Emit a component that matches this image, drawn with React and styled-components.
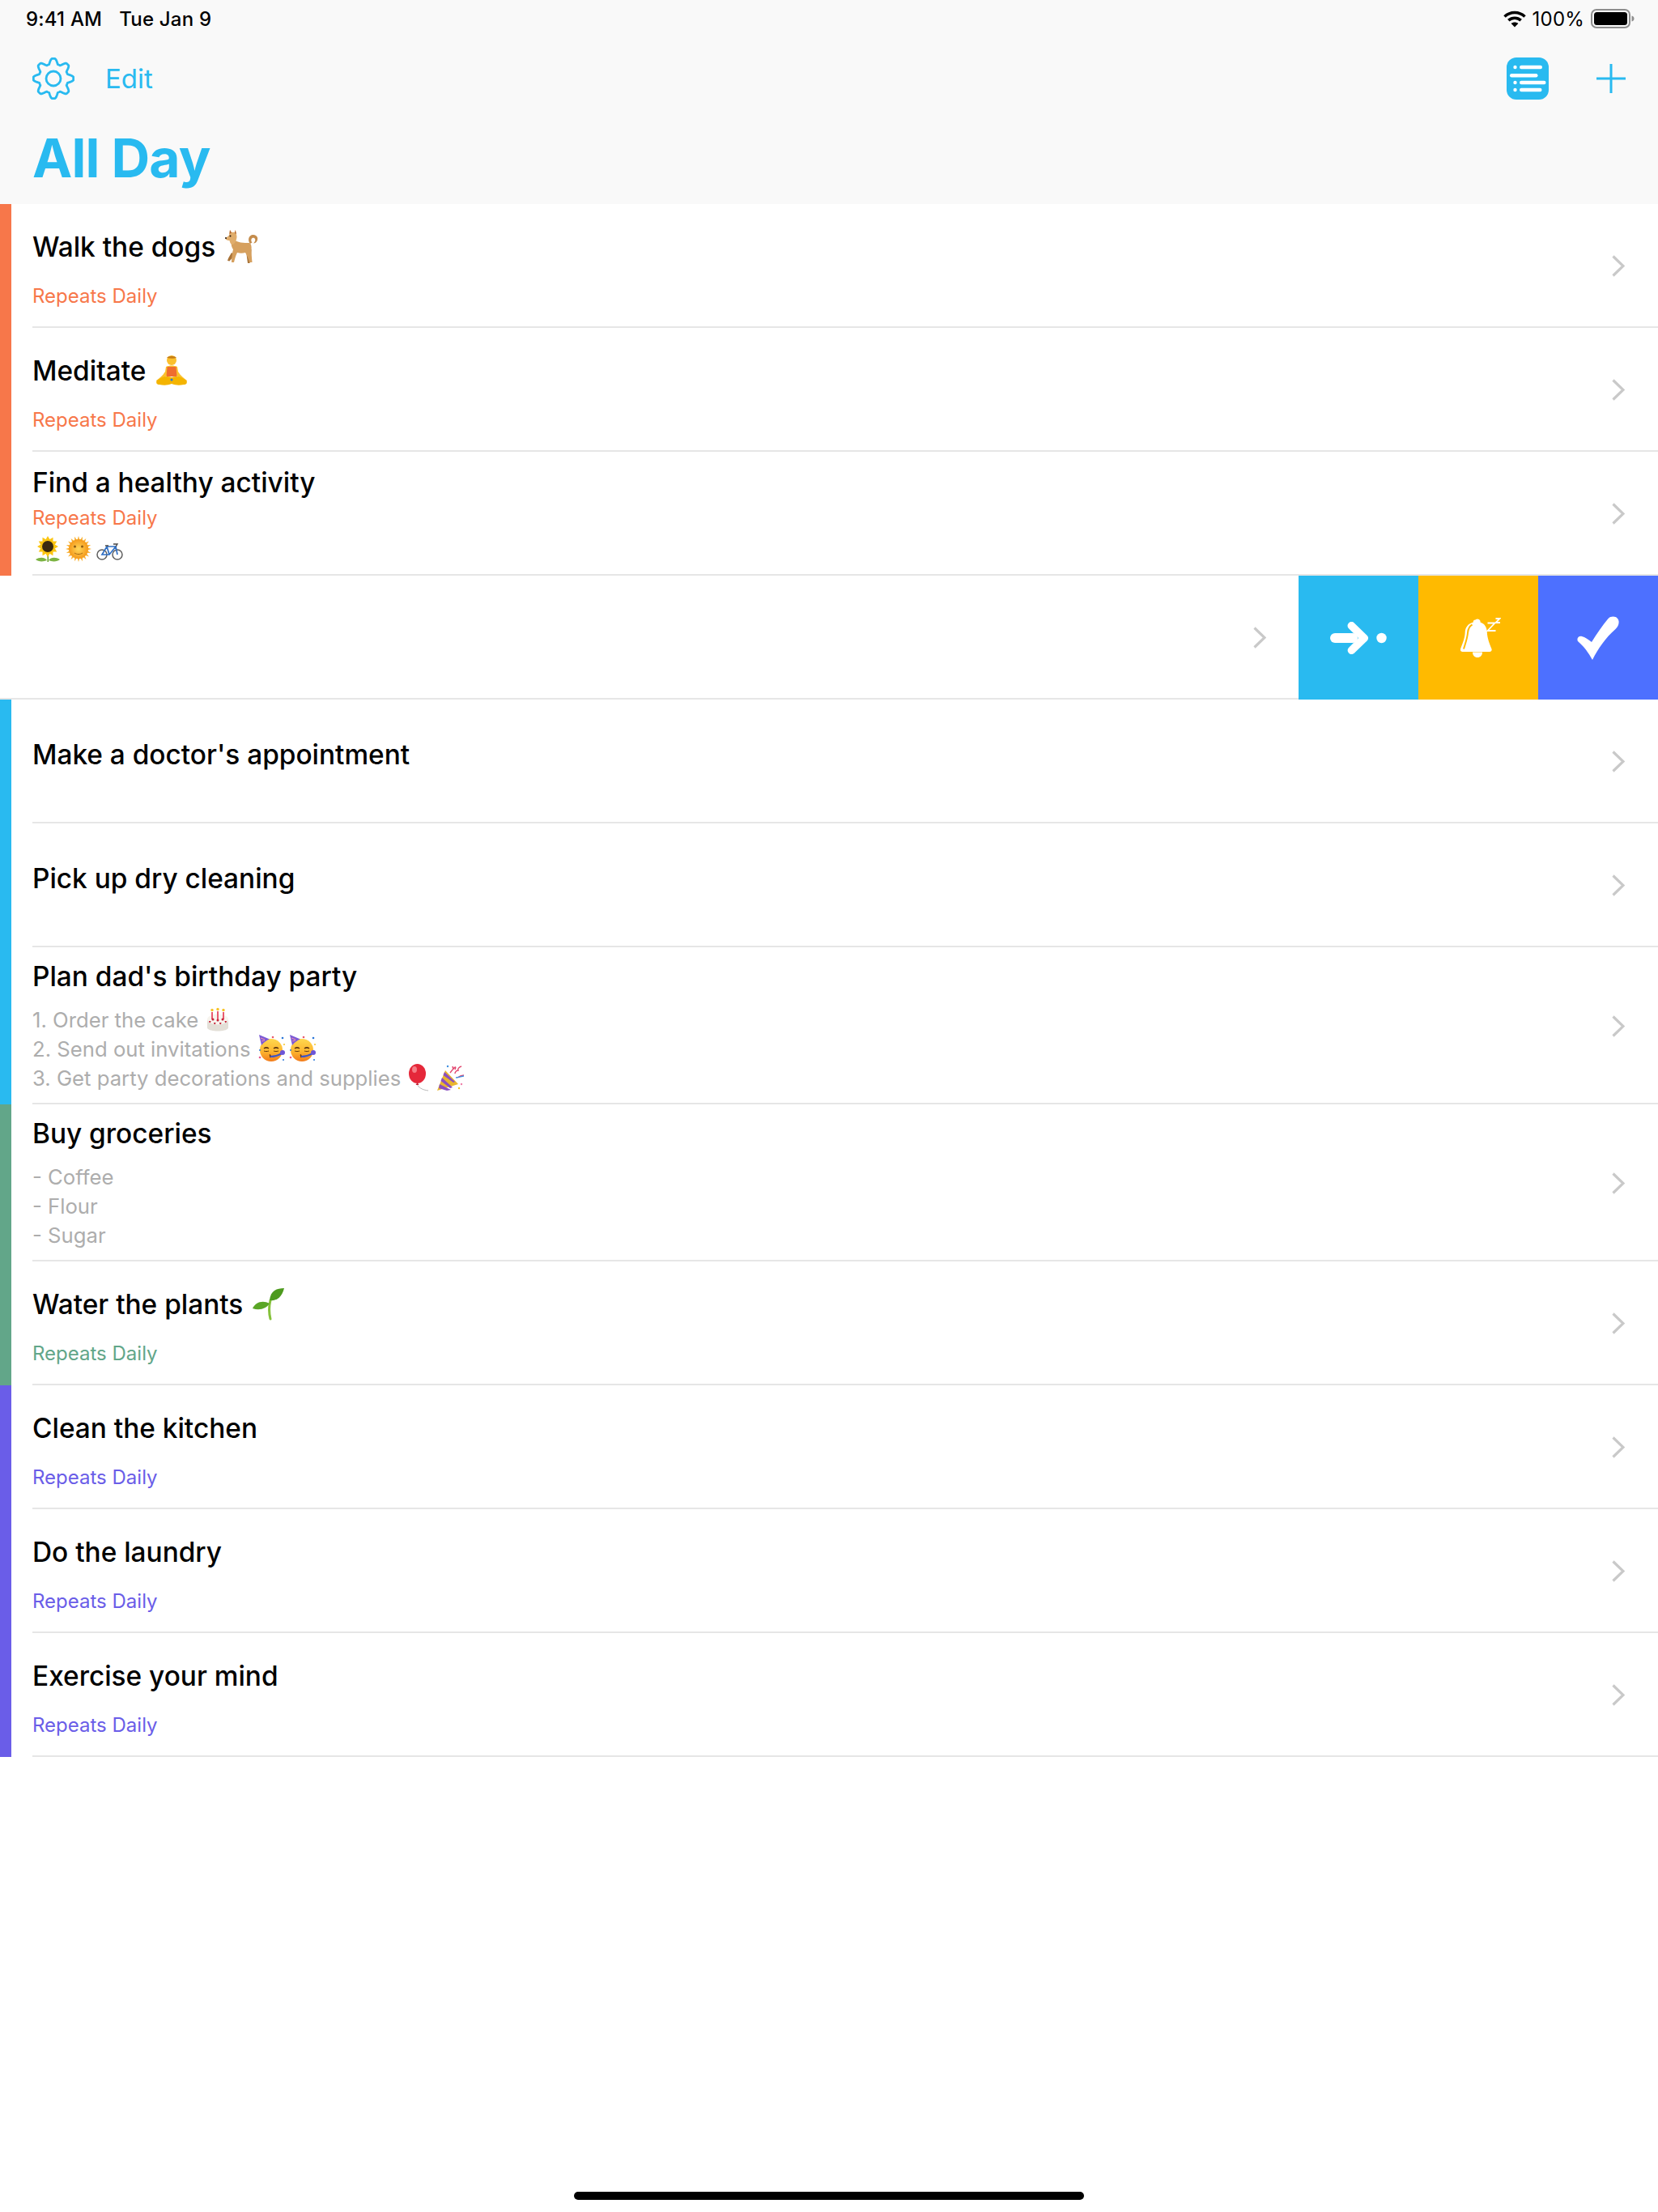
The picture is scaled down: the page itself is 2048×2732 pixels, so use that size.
import React from "react";
import styled, { createGlobalStyle } from "styled-components";

const SKY = "#29baf0";
const ORANGE = "#f7774a";
const GREEN = "#62a689";
const PURPLE = "#6a5de8";

const GlobalStyle = createGlobalStyle`
  html, body { margin: 0; padding: 0; background: #fff; }
  body { font-family: Inter, "Liberation Sans", sans-serif; color: #000; }
`;

const Page = styled.div`
  display: flex;
  flex-direction: column;
  width: 2048px;
  height: 2732px;
  overflow: hidden;
  background: #fff;
`;

const Header = styled.header`
  display: flex;
  flex-direction: column;
  height: 252px;
  flex: none;
  padding: 0 40px;
  box-sizing: border-box;
  background: #f9f9f9;
`;

const StatusBar = styled.div`
  display: flex;
  align-items: center;
  height: 46px;
  margin: 0 -11px 0 -8px;
  font-size: 24px;
  font-weight: 500;
  letter-spacing: 0.2px;
`;

const StatusTime = styled.span`
  margin-right: 21px;
`;

const StatusRight = styled.div`
  display: flex;
  align-items: center;
  gap: 8px;
  margin-left: auto;
  font-weight: 400;
`;

const Toolbar = styled.div`
  display: flex;
  align-items: center;
  height: 52px;
  margin-top: 25px;
`;

const EditLink = styled.span`
  margin-left: 38px;
  font-size: 33px;
  color: ${SKY};
`;

const ToolbarRight = styled.div`
  display: flex;
  align-items: center;
  gap: 59px;
  margin-left: auto;
`;

const Heading = styled.h1`
  margin: 32px 0 0;
  font-size: 66px;
  line-height: 80px;
  font-weight: 700;
  letter-spacing: -0.8px;
  color: ${SKY};
`;

const Group = styled.section`
  border-left: 14px solid ${(p) => p.$color};
  padding-left: 26px;
`;

const Row = styled.div`
  display: flex;
  align-items: center;
  height: ${(p) => p.$height || 153}px;
  box-sizing: border-box;
  padding-right: 41px;
  border-bottom: 2px solid #e6e6e6;
`;

const RowBody = styled.div`
  flex: 1;
  align-self: flex-start;
  padding-top: ${(p) => p.$top || 31}px;
`;

const Title = styled.div`
  display: flex;
  align-items: center;
  gap: 12px;
  height: 44px;
  font-size: 33.4px;
  font-weight: 500;
`;

const Repeats = styled.div`
  margin-top: ${(p) => p.$gap ?? 21}px;
  height: 36px;
  line-height: 36px;
  font-size: 24px;
  color: ${(p) => p.$color};
`;

const Notes = styled.div`
  margin-top: 13px;
`;

const NoteLine = styled.div`
  display: flex;
  align-items: center;
  gap: 9px;
  height: 36px;
  font-size: 25.7px;
  color: #adadad;
`;

const EmojiRow = styled.div`
  display: flex;
  align-items: center;
  gap: 6px;
  height: 36px;
  padding: 2px 0 0 3px;
`;

const Emoji = styled.svg`
  flex: none;
  width: ${(p) => p.$size}px;
  height: ${(p) => p.$size}px;
`;

const Pair = styled.span`
  display: flex;
  gap: ${(p) => p.$gap}px;
`;

const SwipedRow = styled.div`
  display: flex;
  height: 153px;
`;

const SwipedBody = styled.div`
  display: flex;
  align-items: center;
  justify-content: flex-end;
  flex: 1;
  padding-right: 40px;
  border-bottom: 2px solid #e6e6e6;
`;

const ActionButton = styled.button`
  display: flex;
  align-items: center;
  justify-content: center;
  width: 148px;
  height: 153px;
  padding: 0 0 0 ${(p) => p.$shift || 0}px;
  border: 0;
  background: ${(p) => p.$color};
`;

const HomeBar = styled.div`
  width: 630px;
  height: 10px;
  margin: auto auto 15px;
  border-radius: 5px;
  background: #000;
`;

const ChevronSvg = styled.svg`
  flex: none;
  margin-top: 2px;
`;

const gearPath = (() => {
  const pts = [];
  for (let i = 0; i < 160; i++) {
    const t = (i / 160) * Math.PI * 2;
    const w = Math.max(-1, Math.min(1, 1.3 * Math.cos(8 * t)));
    const r = 21.4 + 3.3 * w;
    pts.push(`${(26 + r * Math.cos(t)).toFixed(2)} ${(26 + r * Math.sin(t)).toFixed(2)}`);
  }
  return "M" + pts.join("L") + "Z";
})();

const GearIcon = () => (
  <svg width="52" height="52" viewBox="0 0 52 52" fill="none" stroke={SKY} strokeWidth="2.800" strokeLinejoin="round">
    <path d={gearPath} />
    <circle cx="26" cy="26" r="9" />
  </svg>
);

const WifiIcon = () => (
  <svg width="28" height="21" viewBox="0 0 28 21" fill="none" stroke="#000" strokeWidth="3.600">
    <path d="M1.500 7.500C8.500 .8 19.500 .8 26.500 7.500" />
    <path d="M6.300 12.200c4.400-4 11-4 15.400 0" />
    <path d="M14 20.500 9.600 16c2.600-2 6.200-2 8.800 0z" fill="#000" stroke="none" />
  </svg>
);

const BatteryIcon = () => (
  <svg width="54" height="24" viewBox="0 0 54 24">
    <rect x="1" y="1" width="47" height="22" rx="6" fill="none" stroke="#8e8e8e" strokeWidth="2" />
    <rect x="4" y="4" width="41" height="16" rx="3.500" fill="#000" />
    <path d="M50.500 8.500c2 .5 3 1.800 3 3.500s-1 3-3 3.500z" fill="#8e8e8e" />
  </svg>
);

const ListIcon = () => (
  <svg width="52" height="52" viewBox="0 0 52 52">
    <rect width="52" height="52" rx="12" fill={SKY} />
    <g fill="#fff">
      <circle cx="10.500" cy="12" r="2.200" />
      <rect x="16" y="9.800" width="28" height="4.400" rx="2.200" />
      <rect x="4" y="20" width="34.500" height="4.400" rx="2.200" />
      <circle cx="10.500" cy="31" r="2.200" />
      <rect x="16" y="28.800" width="32.500" height="4.400" rx="2.200" />
      <circle cx="10.500" cy="40" r="2.200" />
      <rect x="16" y="37.800" width="27.500" height="4.400" rx="2.200" />
    </g>
  </svg>
);

const PlusIcon = () => (
  <svg width="36" height="36" viewBox="0 0 36 36" stroke={SKY} strokeWidth="3">
    <path d="M18 0v36M0 18h36" />
  </svg>
);

const Chevron = () => (
  <ChevronSvg width="16" height="27" viewBox="0 0 16 27" fill="none" stroke="#c9c9c9" strokeWidth="3.200">
    <path d="M1.500 1.500 14 13.500 1.500 25.500" />
  </ChevronSvg>
);

const MoveIcon = () => (
  <svg width="72" height="42" viewBox="0 0 72 42" fill="#fff">
    <rect x="1" y="15" width="34" height="12" rx="6" />
    <path d="M24 2.500c2-1.800 4.800-2 6.800 0l16 15.500c1.800 1.700 1.800 4.500 0 6.200l-15.800 15.300c-2 2-5 2-7-.1-2-2-1.800-4.800.2-6.700L36 21 24 9.300c-2-1.900-2-5 0-6.800z" />
    <circle cx="64.500" cy="21" r="6.200" />
  </svg>
);

const BellIcon = () => (
  <svg width="50" height="50" viewBox="0 0 50 50" fill="none">
    <path d="M18.500 2.500a4 4 0 0 1 5 0 3 3 0 0 1 1 3c6 2 8 7 8.300 12 .3 8 3 14 5.700 21 .5 2-.5 3.500-2.500 3.500H2.500C.5 42 -.5 40.500 0 38.500c2.500-7 5.500-13 5.700-21 .3-5 3-10 10-12a3 3 0 0 1 2.800-3z" fill="#fff" />
    <path d="M14.500 8.500c-4 2-5 5.500-5.500 10-.5 7-3 13-5 20" stroke="#ffba00" strokeWidth="2" />
    <path d="M15 42.500c0 4 2.500 6.500 6 6.500s6-2.500 6-6.500z" fill="#fff" />
    <path d="M33.500 6.500h9l-9 9.500h10M43.500 1h5l-5 5h5.500" stroke="#fff" strokeWidth="1.800" />
  </svg>
);

const CheckIcon = () => (
  <svg width="52" height="54" viewBox="0 0 52 54" fill="#fff">
    <path d="M19 54C14 45 9 38 1.500 31.500-1 29 1 24 6 25c4 1 8 4 12 7C25 21 31 12 38.500 3c4-4 12-3 13 3 .5 4-1 7-4 10C35 27 26 40 19 54z" />
  </svg>
);

const DogEmoji = () => (
  <Emoji $size={42} viewBox="0 0 42 42">
    <path d="M31 17c-2-2-3-7 0-9.500 3-2.500 8-1.500 9 2 .8 3.500-1.500 7-5 7 1.500-1.500 3-3.500 2-5.500-1.200-2-4-1.500-4.500.5-.5 1.500 0 3 1 4z" fill="#c48c4c" />
    <path d="M26 25l1 9 1 7h2.500l1.500-9 .5-8z" fill="#a87338" />
    <path d="M8 28 4 35l-1 3 2.500.5L12 31z" fill="#a87338" />
    <path d="M10 11c5 5 13 5 20 5 2.500 1 3 5 2.500 9 0 4 .5 9 1 15H30c-1-4-3-9-5-12-3 1-7 1-10 0-2 4-3 8-4 12H8c0-6 1-12 2-16-3-4-3-9 0-13z" fill="#d6a05e" />
    <path d="M6 0l2 3c1-.5 2.500-.5 4 0l1-3 1.500 8c0 4-2 9-5 10-2 .5-3.500-2-4-5-2 0-4.500-.5-5-2 0-1.500 3-2.500 4.500-4.500z" fill="#e0ad6c" />
    <path d="M6 0l2 3.500-2.500 1.500zM12.500 0l-.5 4 2 1z" fill="#b5652e" />
    <circle cx="6.500" cy="7.500" r="1" fill="#20130a" />
    <circle cx="1" cy="10" r="1" fill="#20130a" />
  </Emoji>
);

const MeditateEmoji = () => (
  <Emoji $size={40} viewBox="0 0 40 40">
    <circle cx="20" cy="7" r="6" fill="#fbc02d" />
    <path d="M14 4c2-3 10-3 12 0-3 1-8 1-12 0z" fill="#c77f16" />
    <path d="M13 15c4-2 10-2 14 0l1 6c3 5 7 8 11 11l-1 2c-5-2-9-5-12-8H14c-3 3-7 6-12 8l-1-2c4-3 8-6 11-11z" fill="#fbc02d" />
    <path d="M14.500 15h11l1 12h-13z" fill="#ef6c2e" />
    <path d="M2 32c6-5 12-6 18-4 6-2 12-1 18 4 2 3 0 5-3 5-5 1-10 1-15-1-5 2-10 2-15 1-3 0-5-2-3-5z" fill="#f4b400" />
    <circle cx="20" cy="31" r="1.500" fill="#2b77d9" />
  </Emoji>
);

const SunflowerEmoji = () => (
  <Emoji $size={32} viewBox="0 0 32 32">
    <path d="M15.500 20h1.500v12h-1.500z" fill="#6ea42c" />
    <path d="M15 30C12 26 6 26 1 29c3 3 10 3 14 1zM17 30c3-4 9-4 14-1-3 3-10 3-14 1z" fill="#7cb342" />
    {[0, 30, 60, 90, 120, 150, 180, 210, 240, 270, 300, 330].map((a) => (
      <path key={a} d="M16 0l3.500 6-3.500 7-3.500-7z" fill="#fbc512" transform={`rotate(${a} 16 13)`} />
    ))}
    <circle cx="16" cy="13" r="7" fill="#3a2a10" />
  </Emoji>
);

const SunEmoji = () => (
  <Emoji $size={32} viewBox="0 0 32 32">
    <defs>
      <radialGradient id="sunFace">
        <stop offset="0" stopColor="#ffd75a" />
        <stop offset="1" stopColor="#f59a1b" />
      </radialGradient>
    </defs>
    {Array.from({ length: 20 }).map((_, i) => (
      <path key={i} d="M16 0l1.500 5h-3z" fill="#f9b233" transform={`rotate(${i * 18} 16 16)`} />
    ))}
    <circle cx="16" cy="16" r="12" fill="url(#sunFace)" />
    <circle cx="11.500" cy="13" r="1.500" fill="#8a5a14" />
    <circle cx="20.500" cy="13" r="1.500" fill="#8a5a14" />
    <path d="M11 21c3 2 7 2 10 0" stroke="#a56b16" strokeWidth="1" fill="none" />
  </Emoji>
);

const BikeEmoji = () => (
  <Emoji $size={33} viewBox="0 0 33 33">
    <g fill="none">
      <circle cx="7" cy="23" r="6" stroke="#5f5f5f" strokeWidth="1.500" />
      <circle cx="26" cy="23" r="6" stroke="#5f5f5f" strokeWidth="1.500" />
      <path d="M7 23l6-10h11l-8 10H7zM13 13l3 10M24 13l2 10" stroke="#2f6fc4" strokeWidth="1.700" />
      <path d="M11 12h4M21 10h5l-2 3" stroke="#444" strokeWidth="1.300" />
    </g>
  </Emoji>
);

const CakeEmoji = () => (
  <Emoji $size={30} viewBox="0 0 30 30">
    <path d="M2 15v10c0 6 26 6 26 0V15z" fill="#e3dfd7" />
    <ellipse cx="15" cy="15" rx="13" ry="6.500" fill="#f7f4ee" />
    <path d="M4 17c.5 3 2 3 2.500 0zM10 19c.5 3 2 3 2.500 0zM17 19c.5 3 2 3 2.500 0zM23.500 17c.5 3 2 3 2.500 0z" fill="#c62338" />
    <g fill="#e85a6e">
      <rect x="7" y="6" width="2" height="9" />
      <rect x="14" y="5" width="2" height="10" />
      <rect x="21" y="6" width="2" height="9" />
    </g>
    <g fill="#f7c325">
      <circle cx="8" cy="3.500" r="1.700" />
      <circle cx="15" cy="2.500" r="1.700" />
      <circle cx="22" cy="3.500" r="1.700" />
    </g>
    <circle cx="9" cy="15" r="1.500" fill="#c62338" />
    <circle cx="15" cy="16" r="1.500" fill="#c62338" />
    <circle cx="21" cy="15" r="1.500" fill="#c62338" />
  </Emoji>
);

const PartyFace = ({ id }) => (
  <Emoji $size={34} viewBox="0 0 34 34">
    <defs>
      <linearGradient id={id} x1="0" y1="0" x2="0" y2="1">
        <stop offset="0" stopColor="#ffd84f" />
        <stop offset="0.550" stopColor="#fdb62f" />
        <stop offset="1" stopColor="#f27c1c" />
      </linearGradient>
    </defs>
    <circle cx="16" cy="19" r="14" fill={`url(#${id})`} />
    <path d="M1 0l13 5.500c-3 1-7 3.500-10 7.500z" fill="#7a5ad6" />
    <path d="M3 4l5 2M4 8l4-1" stroke="#e88ab0" strokeWidth="1.200" />
    <path d="M7 17c2-1.500 4-1.500 6 0M19 17c2-1.500 4-1.500 6 0" stroke="#5e3510" strokeWidth="1.500" fill="none" />
    <path d="M7 20c2 .8 4 .8 6 0M19 20c2 .8 4 .8 6 0" stroke="#5e3510" strokeWidth="1" fill="none" />
    <path d="M14 24.500c1 1 1.500 2 .5 3.500" stroke="#5e3510" strokeWidth="1.500" fill="none" />
    <path d="M15 27c5 0 9-1 14-4" stroke="#3f55c8" strokeWidth="2.200" fill="none" />
    <circle cx="30" cy="22" r="3" fill="#6d55d8" />
    <circle cx="30" cy="4" r="1.300" fill="#2b77d9" />
    <circle cx="2" cy="28" r="1.300" fill="#e85a8e" />
    <circle cx="18" cy="3" r="1.300" fill="#e85a6e" />
    <circle cx="2" cy="19" r="1" fill="#2b77d9" />
    <circle cx="31" cy="31" r="1" fill="#2b77d9" />
    <circle cx="32" cy="12" r="1" fill="#f7c325" />
  </Emoji>
);

const BalloonEmoji = () => (
  <Emoji $size={34} viewBox="0 0 34 34">
    <path d="M11 25c2 4 6 7 14 8" stroke="#b9b9b9" strokeWidth="1" fill="none" />
    <ellipse cx="11.500" cy="12" rx="10.500" ry="12" fill="#e5283a" />
    <ellipse cx="8" cy="7" rx="3" ry="4" fill="#f57c85" />
    <path d="M9.500 26l2-3 2 3z" fill="#c21f30" />
  </Emoji>
);

const PopperEmoji = () => (
  <Emoji $size={35} viewBox="0 0 35 35">
    <path d="M1 33 11 8l16 17z" fill="#eab52e" />
    <path d="M4 25l14 7-5 1-10-3zM7 17l13 12-3 1L5.500 21zM10 10l13 12-2 1L8.500 14z" fill="#8a4fc0" />
    <path d="M17 11c6-8 8-9 6-4M26 17c3-2 6-3 8-3M20 3l1 4M31 3c-3 1-5 3-4 5-2 0-4 2-4 4" stroke="#e2476f" strokeWidth="1.400" fill="none" />
    <path d="M24 17c4 0 7-2 10-2" stroke="#3f8fe0" strokeWidth="1.500" fill="none" />
    <circle cx="14" cy="3" r="1.200" fill="#3f8fe0" />
    <circle cx="31" cy="25" r="1.200" fill="#ef7fa8" />
    <circle cx="28" cy="30" r="1.200" fill="#f7c325" />
  </Emoji>
);

const SeedlingEmoji = () => (
  <Emoji $size={40} viewBox="0 0 40 40">
    <path d="M22 38c-2-8-2-15 0-23" stroke="#85c13a" strokeWidth="3" fill="none" strokeLinecap="round" />
    <path d="M39 0c-9 0-17 3-18 15 8 1 15-3 18-15z" fill="#4d9a1e" />
    <path d="M0 25c3-7 12-11 21-6-4 6-12 9-21 6z" fill="#5aa626" />
  </Emoji>
);

const Task = ({ title, emoji, color, height, top, gap, children }) => (
  <Row $height={height}>
    <RowBody $top={top}>
      <Title>
        {title}
        {emoji}
      </Title>
      {color && (
        <Repeats $color={color} $gap={gap}>
          Repeats Daily
        </Repeats>
      )}
      {children}
    </RowBody>
    <Chevron />
  </Row>
);

const App = () => (
  <Page>
    <GlobalStyle />
    <Header>
      <StatusBar>
        <StatusTime>9:41 AM</StatusTime>
        <span>Tue Jan 9</span>
        <StatusRight>
          <WifiIcon />
          <span>100%</span>
          <BatteryIcon />
        </StatusRight>
      </StatusBar>
      <Toolbar>
        <GearIcon />
        <EditLink>Edit</EditLink>
        <ToolbarRight>
          <ListIcon />
          <PlusIcon />
        </ToolbarRight>
      </Toolbar>
      <Heading>All Day</Heading>
    </Header>

    <Group $color={ORANGE}>
      <Task title="Walk the dogs" emoji={<DogEmoji />} color={ORANGE} />
      <Task title="Meditate" emoji={<MeditateEmoji />} color={ORANGE} />
      <Task title="Find a healthy activity" color={ORANGE} top={16} gap={4}>
        <EmojiRow>
          <SunflowerEmoji />
          <SunEmoji />
          <BikeEmoji />
        </EmojiRow>
      </Task>
    </Group>

    <SwipedRow>
      <SwipedBody>
        <Chevron />
      </SwipedBody>
      <ActionButton $color={SKY}>
        <MoveIcon />
      </ActionButton>
      <ActionButton $color="#ffba00" $shift={6}>
        <BellIcon />
      </ActionButton>
      <ActionButton $color="#4d70ff">
        <CheckIcon />
      </ActionButton>
    </SwipedRow>

    <Group $color={SKY}>
      <Task title="Make a doctor's appointment" top={46} />
      <Task title="Pick up dry cleaning" top={46} />
      <Task title="Plan dad's birthday party" height={194} top={14}>
        <Notes>
          <NoteLine>
            1. Order the cake
            <CakeEmoji />
          </NoteLine>
          <NoteLine>
            2. Send out invitations
            <Pair $gap={4}>
              <PartyFace id="partyA" />
              <PartyFace id="partyB" />
            </Pair>
          </NoteLine>
          <NoteLine>
            3. Get party decorations and supplies
            <Pair $gap={1}>
              <BalloonEmoji />
              <PopperEmoji />
            </Pair>
          </NoteLine>
        </Notes>
      </Task>
    </Group>

    <Group $color={GREEN}>
      <Task title="Buy groceries" height={194} top={14}>
        <Notes>
          <NoteLine>- Coffee</NoteLine>
          <NoteLine>- Flour</NoteLine>
          <NoteLine>- Sugar</NoteLine>
        </Notes>
      </Task>
      <Task title="Water the plants" emoji={<SeedlingEmoji />} color={GREEN} />
    </Group>

    <Group $color={PURPLE}>
      <Task title="Clean the kitchen" color={PURPLE} />
      <Task title="Do the laundry" color={PURPLE} />
      <Task title="Exercise your mind" color={PURPLE} />
    </Group>

    <HomeBar />
  </Page>
);

export default App;
